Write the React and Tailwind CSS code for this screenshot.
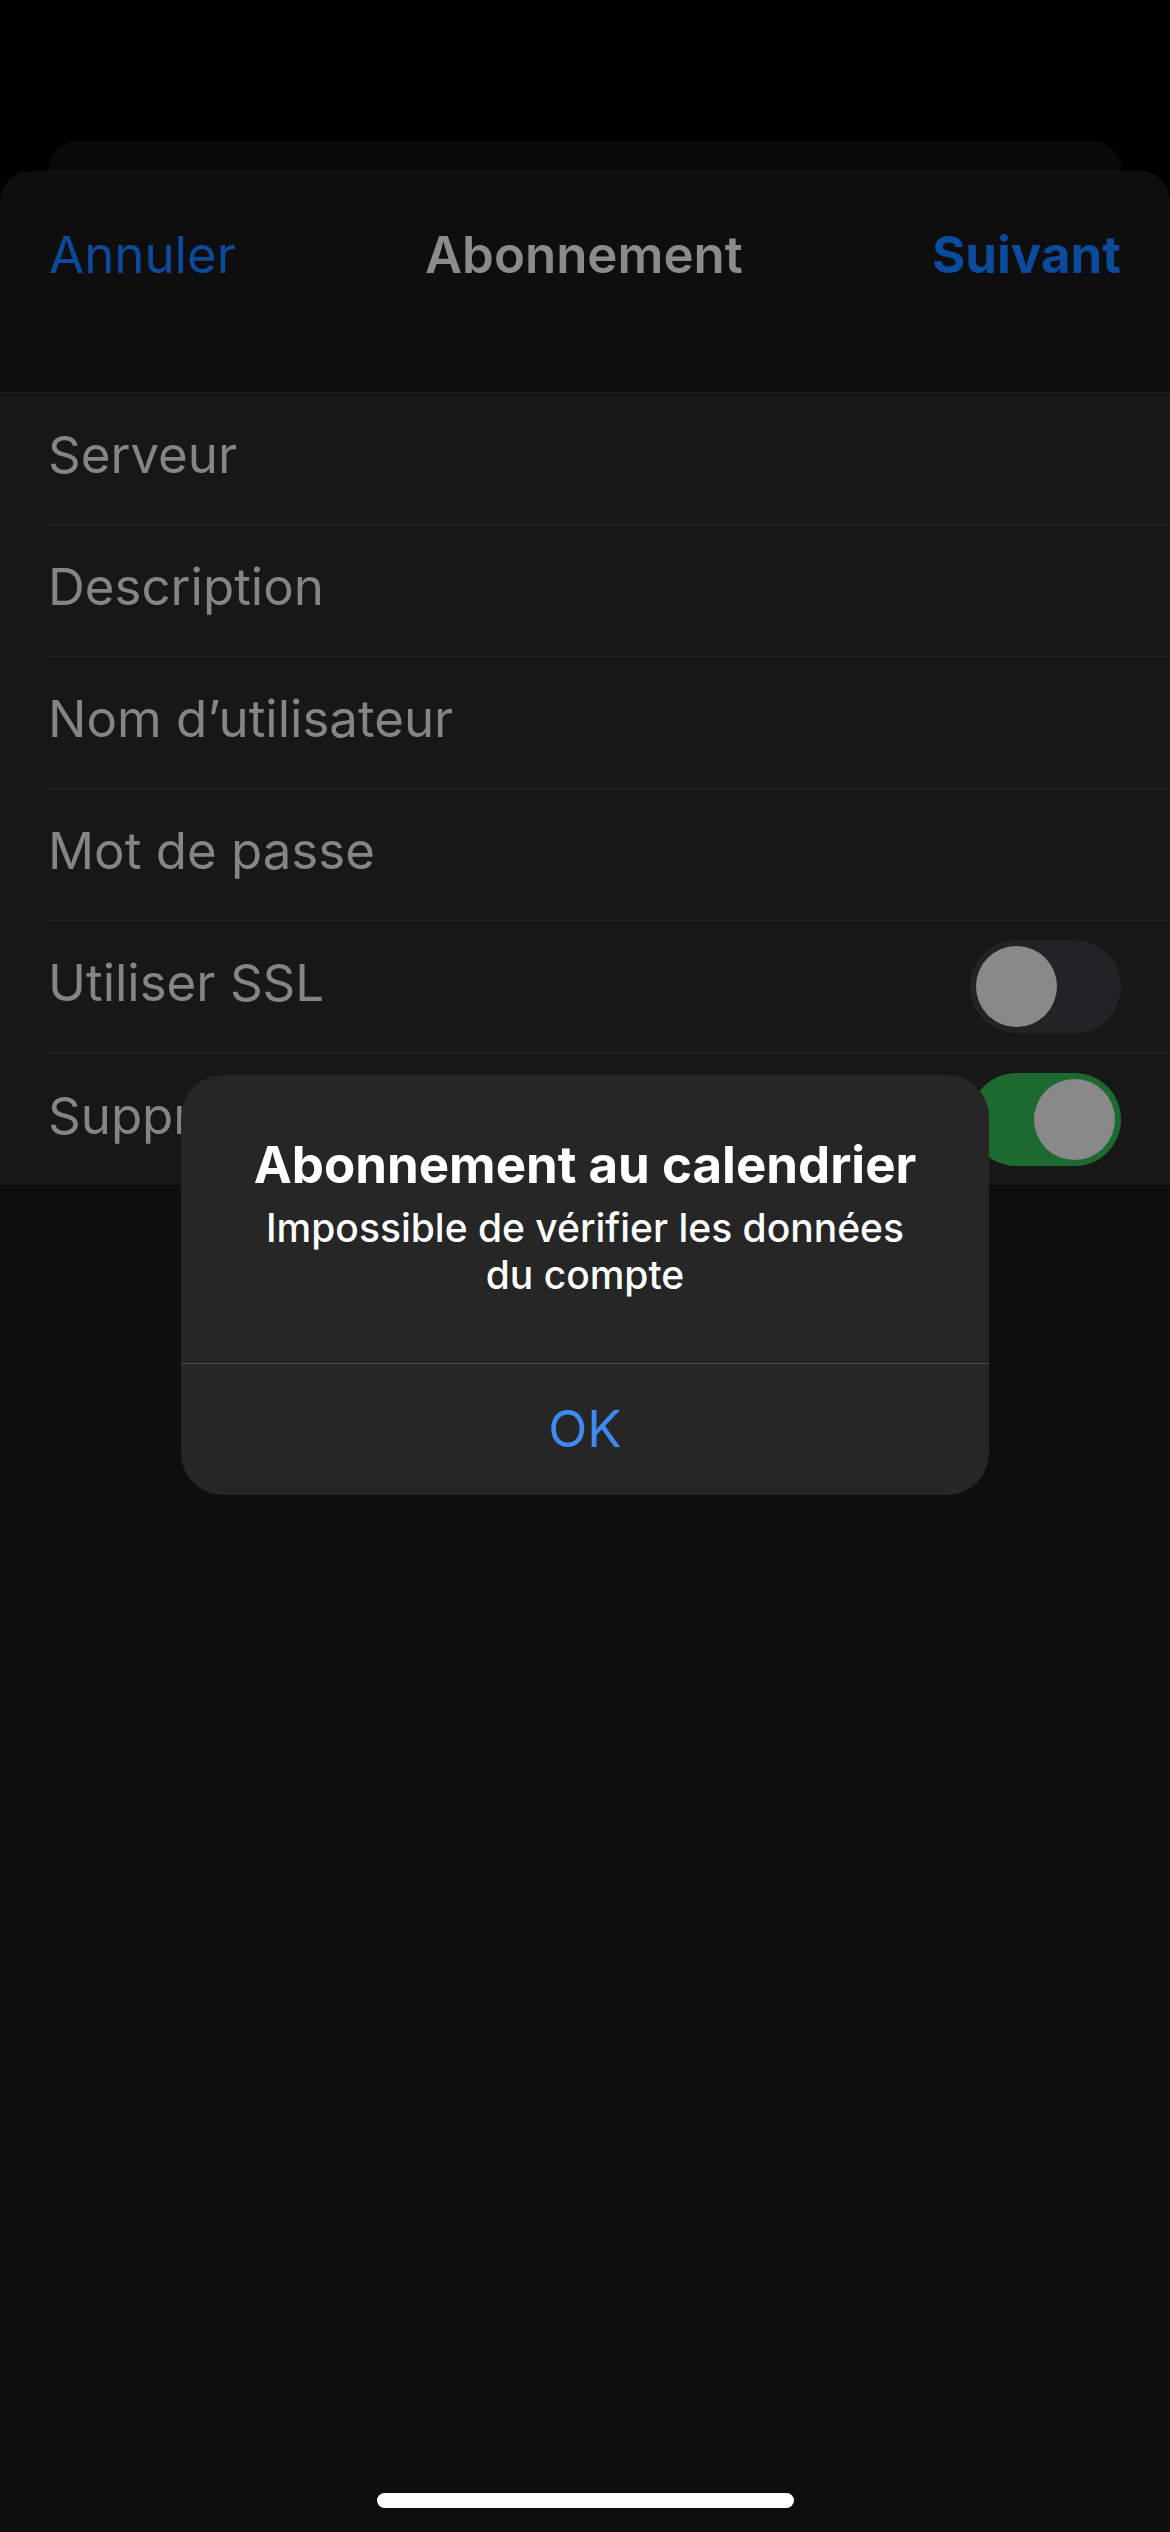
const rows = [
  { label: 'Serveur' },
  { label: 'Description' },
  { label: 'Nom d\u2019utilisateur' },
  { label: 'Mot de passe' },
  { label: 'Utiliser SSL', toggle: 'off' },
  { label: 'Supprimer les alarmes', toggle: 'on' },
]

function Toggle({ on }) {
  return (
    <div
      className={`flex items-center w-[151px] h-[93px] rounded-full p-[6px] ${
        on ? 'justify-end bg-[#1d6a30]' : 'justify-start bg-[#232326]'
      }`}
    >
      <div className="w-[81px] h-[81px] rounded-full bg-[#898989]" />
    </div>
  )
}

export default function App() {
  return (
    <div className="relative w-[1170px] h-[2532px] overflow-hidden bg-black font-['Inter',sans-serif]">
      {/* status area */}
      <div className="h-[141px]" />

      {/* sheet behind */}
      <div className="mx-[48px] h-[30px] rounded-t-[30px] bg-[#0a0a0a]" />

      {/* front sheet */}
      <div className="h-[2361px] rounded-t-[30px] bg-[#0e0e0e]">
        {/* nav bar */}
        <div className="flex justify-between items-start h-[221px] px-[49px] pt-[53px] text-[51px] leading-[61px]">
          <span className="text-[#0b4b9d]">Annuler</span>
          <span className="font-semibold text-[#8b8b8b]">Abonnement</span>
          <span className="font-bold text-[#0b4b9d]">Suivant</span>
        </div>

        {/* form */}
        <div className="border-t border-[#1f1f21] bg-[#171717]">
          {rows.map((row, i) => (
            <div key={row.label} className="pl-[48px] h-[132px]">
              <div
                className={`flex items-center justify-between h-full pr-[49px] ${
                  i < rows.length - 1 ? 'border-b border-[#252527]' : ''
                }`}
              >
                <span className="pb-[8px] text-[51px] leading-[61px] text-[#858585]">{row.label}</span>
                {row.toggle && <Toggle on={row.toggle === 'on'} />}
              </div>
            </div>
          ))}
        </div>
      </div>

      {/* alert */}
      <div className="absolute left-[181px] top-[1075px] w-[808px] h-[420px] rounded-[42px] bg-[#262626] flex flex-col">
        <div className="flex flex-col items-center h-[288px] pt-[59px] px-[40px] text-center text-white">
          <div className="text-[51px] leading-[61px] font-bold">Abonnement au calendrier</div>
          <div className="mt-[9px] text-[39px] leading-[47px] font-medium">
            Impossible de vérifier les données
            <br />
            du compte
          </div>
        </div>
        <div className="h-[1px] bg-[#4a4a4a]" />
        <div className="flex-1 flex items-center justify-center text-[51px] text-[#3f8af2]">OK</div>
      </div>

      {/* home indicator */}
      <div className="absolute left-[377px] top-[2493px] w-[417px] h-[15px] rounded-full bg-white" />
    </div>
  )
}
